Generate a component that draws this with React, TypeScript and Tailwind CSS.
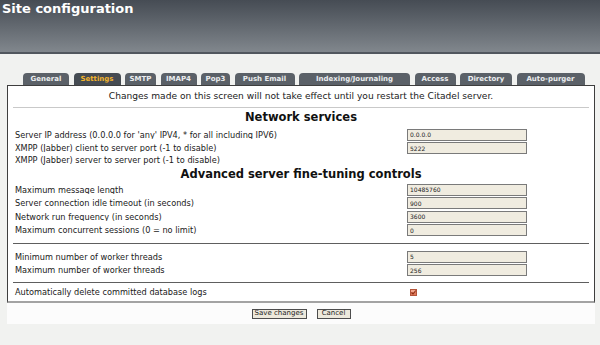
import React from "react"

const tabs = [
  { label: "General", w: "w-[46px]" },
  { label: "Settings", w: "w-[47px]", active: true },
  { label: "SMTP", w: "w-[31px]" },
  { label: "IMAP4", w: "w-[36px]" },
  { label: "Pop3", w: "w-[29px]" },
  { label: "Push Email", w: "w-[60px]" },
  { label: "Indexing/Journaling", w: "w-[111px]" },
  { label: "Access", w: "w-[41px]" },
  { label: "Directory", w: "w-[52px]" },
  { label: "Auto-purger", w: "w-[68px]" },
]

function Field({ label, value }: { label: string; value?: string }) {
  return (
    <div className="grid h-[13.5px] grid-cols-[392px_120px] items-center px-[7px]">
      <span className="truncate text-[8.2px] leading-none text-[#1a1a1a]">{label}</span>
      {value !== undefined && (
        <input
          readOnly
          value={value}
          className="h-[12px] w-[120px] border border-[#7a7a7a] bg-[#f0ece0] px-[2px] text-[6px] leading-none text-[#222]"
        />
      )}
    </div>
  )
}

function Rule({ light }: { light?: boolean }) {
  return <div className={`mx-[5px] border-t ${light ? "border-[#c9c9c9]" : "border-[#5e5e5e]"}`} />
}

export default function App() {
  return (
    <div className="h-[345px] w-[600px] overflow-hidden bg-[#f1f2f0] font-['DejaVu_Sans',sans-serif]">
      <div className="h-[54px] border-b-2 border-[#51575e] bg-gradient-to-b from-[#464c54] to-[#81878d] pl-[2px] pt-[1.5px]">
        <h1 className="text-[13px] leading-[13px] font-bold text-white">Site configuration</h1>
      </div>

      <div className="flex gap-[4.5px] pl-[23px] pt-[19px]">
        {tabs.map((t) => (
          <div
            key={t.label}
            className={`flex h-[12px] items-center justify-center rounded-t-[4px] text-[7px] leading-none font-bold ${t.w} ${
              t.active ? "bg-[#454b52] text-[#f2b32a]" : "bg-[#5b6168] text-[#eceef0]"
            }`}
          >
            {t.label}
          </div>
        ))}
      </div>

      <div className="ml-[7px] w-[588px] bg-[#fcfcfc]">
        <div className="border border-b-2 border-[#3e3e3e] border-b-[#a3a3a3] bg-white">
          <div className="flex h-[21px] items-center justify-center text-[9.1px] leading-none text-[#1a1a1a]">
            Changes made on this screen will not take effect until you restart the Citadel server.
          </div>
          <Rule light />
          <h2 className="flex h-[20px] items-center justify-center text-[11.5px] leading-none font-bold text-[#111]">
            Network services
          </h2>
          <Field label="Server IP address (0.0.0.0 for 'any' IPV4, * for all including IPV6)" value="0.0.0.0" />
          <Field label="XMPP (Jabber) client to server port (-1 to disable)" value="5222" />
          <div className="flex h-[11px] items-center px-[7px] text-[8.2px] leading-none text-[#1a1a1a]">
            XMPP (Jabber) server to server port (-1 to disable)
          </div>
          <h2 className="flex h-[17px] items-center justify-center text-[11.5px] leading-none font-bold text-[#111]">
            Advanced server fine-tuning controls
          </h2>
          <Field label="Maximum message length" value="10485760" />
          <Field label="Server connection idle timeout (in seconds)" value="900" />
          <Field label="Network run frequency (in seconds)" value="3600" />
          <Field label="Maximum concurrent sessions (0 = no limit)" value="0" />
          <div className="h-[6px]" />
          <Rule />
          <div className="h-[6px]" />
          <Field label="Minimum number of worker threads" value="5" />
          <Field label="Maximum number of worker threads" value="256" />
          <div className="h-[5px]" />
          <Rule />
          <div className="grid h-[18px] grid-cols-[392px_120px] items-center px-[7px] pb-[5px] pt-[5px]">
            <span className="text-[8.2px] leading-none text-[#1a1a1a]">Automatically delete committed database logs</span>
            <svg width="7" height="7" viewBox="0 0 7 7" className="ml-[3px]">
              <rect x="0.5" y="0.5" width="6" height="6" fill="#e0795a" stroke="#b5553a" />
              <rect x="1" y="1" width="5" height="2" fill="#f2a68e" />
              <path d="M1.5 3.5 L3 5 L5.8 1.5" fill="none" stroke="#8b2e14" strokeWidth="1.1" />
            </svg>
          </div>
        </div>

        <div className="flex h-[21px] items-center justify-center gap-[10px]">
          <button className="h-[10px] w-[55px] border border-[#4d4d4d] bg-[#ede9dc] text-[7px] leading-none text-[#222]">
            Save changes
          </button>
          <button className="h-[10px] w-[34px] border border-[#4d4d4d] bg-[#ede9dc] text-[7px] leading-none text-[#222]">
            Cancel
          </button>
        </div>
      </div>
    </div>
  )
}
